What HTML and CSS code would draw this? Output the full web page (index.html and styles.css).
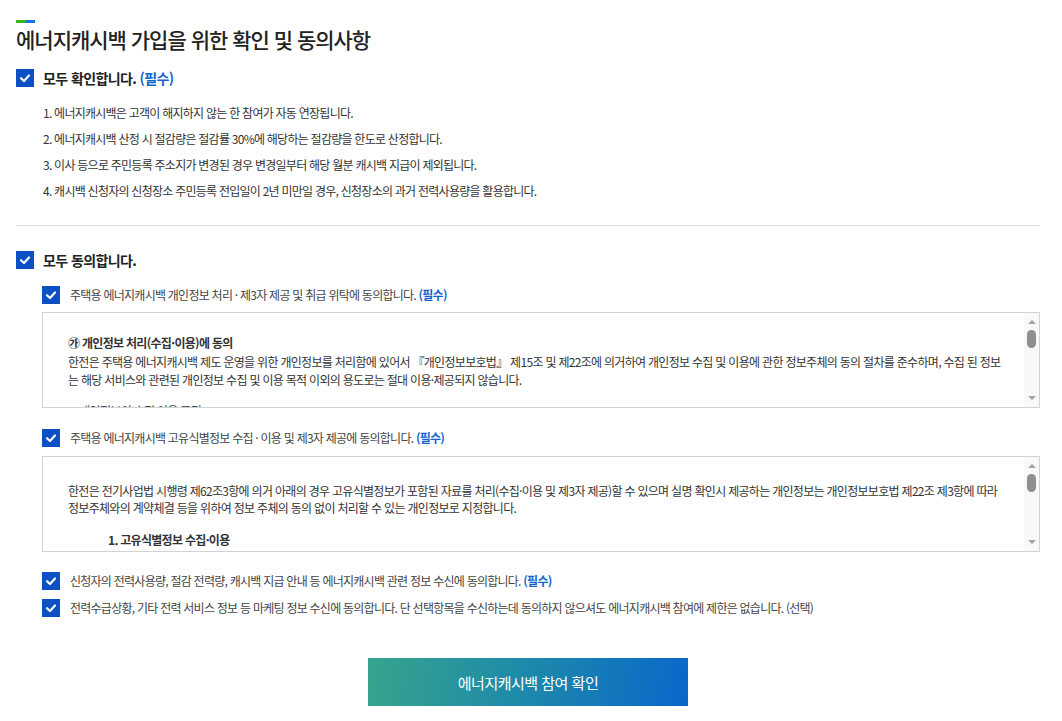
FILE: index.html
```html
<!DOCTYPE html>
<html lang="ko">
  <head>
    <meta charset="UTF-8" />
    <meta name="viewport" content="width=device-width, initial-scale=1.0" />
    <title>에너지캐시백 가입 동의</title>
    <link rel="stylesheet" href="styles.css">
  </head>
  <body>
    <div class="wrap">
      <div class="accent"><span class="g"></span><span class="b"></span></div>
      <h1 class="title">에너지캐시백 가입을 위한 확인 및 동의사항</h1>

      <label class="chk-all chk-confirm">
        <span class="box"><svg viewBox="0 0 18 18" width="18" height="18"><polyline points="5,9.2 8,12 13,6.5" fill="none" stroke="#fff" stroke-width="2.2" stroke-linecap="round" stroke-linejoin="round"/></svg></span>
        <span>모두 확인합니다. <em class="req">(필수)</em></span>
      </label>

      <ol class="notice">
        <li>1. 에너지캐시백은 고객이 해지하지 않는 한 참여가 자동 연장됩니다.</li>
        <li>2. 에너지캐시백 산정 시 절감량은 절감률 30%에 해당하는 절감량을 한도로 산정합니다.</li>
        <li>3. 이사 등으로 주민등록 주소지가 변경된 경우 변경일부터 해당 월분 캐시백 지급이 제외됩니다.</li>
        <li>4. 캐시백 신청자의 신청장소 주민등록 전입일이 2년 미만일 경우, 신청장소의 과거 전력사용량을 활용합니다.</li>
      </ol>

      <hr class="divider" />

      <label class="chk-all chk-agree">
        <span class="box"><svg viewBox="0 0 18 18" width="18" height="18"><polyline points="5,9.2 8,12 13,6.5" fill="none" stroke="#fff" stroke-width="2.2" stroke-linecap="round" stroke-linejoin="round"/></svg></span>
        <span>모두 동의합니다.</span>
      </label>

      <div class="agree-list">
        <label class="chk">
          <span class="box"><svg viewBox="0 0 18 18" width="18" height="18"><polyline points="5,9.2 8,12 13,6.5" fill="none" stroke="#fff" stroke-width="2.2" stroke-linecap="round" stroke-linejoin="round"/></svg></span>
          <span>주택용 에너지캐시백 개인정보 처리 · 제3자 제공 및 취급 위탁에 동의합니다. <em class="req">(필수)</em></span>
        </label>
        <div class="terms">
          <div class="terms-body">
            <p class="strong">㉮ 개인정보 처리(수집·이용)에 동의</p>
            <p>한전은 주택용 에너지캐시백 제도 운영을 위한 개인정보를 처리함에 있어서 『개인정보보호법』 제15조 및 제22조에 의거하여 개인정보 수집 및 이용에 관한 정보주체의 동의 절차를 준수하며, 수집 된 정보는 해당 서비스와 관련된 개인정보 수집 및 이용 목적 이외의 용도로는 절대 이용·제공되지 않습니다.</p>
            <p class="gap">1. 개인정보의 수집·이용 목적</p>
            <p>에너지캐시백 참여 신청 접수, 참여자 확인, 전력 절감량 산정 및 캐시백 지급, 제도 관련 안내 및 고지사항 전달</p>
          </div>
          <div class="scrollbar">
            <span class="arrow-up"></span>
            <span class="thumb"></span>
            <span class="arrow-down"></span>
          </div>
        </div>

        <label class="chk">
          <span class="box"><svg viewBox="0 0 18 18" width="18" height="18"><polyline points="5,9.2 8,12 13,6.5" fill="none" stroke="#fff" stroke-width="2.2" stroke-linecap="round" stroke-linejoin="round"/></svg></span>
          <span>주택용 에너지캐시백 고유식별정보 수집 · 이용 및 제3자 제공에 동의합니다. <em class="req">(필수)</em></span>
        </label>
        <div class="terms terms-2">
          <div class="terms-body">
            <p>한전은 전기사업법 시행령 제62조3항에 의거 아래의 경우 고유식별정보가 포함된 자료를 처리(수집·이용 및 제3자 제공)할 수 있으며 실명 확인시 제공하는 개인정보는 개인정보보호법 제22조 제3항에 따라 정보주체와의 계약체결 등을 위하여 정보 주체의 동의 없이 처리할 수 있는 개인정보로 지정합니다.</p>
            <p class="strong sub">1. 고유식별정보 수집·이용</p>
            <p class="sub">수집·이용 목적 : 에너지캐시백 참여자 본인 확인 및 캐시백 지급</p>
          </div>
          <div class="scrollbar">
            <span class="arrow-up"></span>
            <span class="thumb"></span>
            <span class="arrow-down"></span>
          </div>
        </div>

        <label class="chk chk-gap">
          <span class="box"><svg viewBox="0 0 18 18" width="18" height="18"><polyline points="5,9.2 8,12 13,6.5" fill="none" stroke="#fff" stroke-width="2.2" stroke-linecap="round" stroke-linejoin="round"/></svg></span>
          <span>신청자의 전력사용량, 절감 전력량, 캐시백 지급 안내 등 에너지캐시백 관련 정보 수신에 동의합니다. <em class="req">(필수)</em></span>
        </label>
        <label class="chk chk-tight">
          <span class="box"><svg viewBox="0 0 18 18" width="18" height="18"><polyline points="5,9.2 8,12 13,6.5" fill="none" stroke="#fff" stroke-width="2.2" stroke-linecap="round" stroke-linejoin="round"/></svg></span>
          <span>전력수급상황, 기타 전력 서비스 정보 등 마케팅 정보 수신에 동의합니다. 단 선택항목을 수신하는데 동의하지 않으셔도 에너지캐시백 참여에 제한은 없습니다. (선택)</span>
        </label>
      </div>

      <div class="actions">
        <button type="button" class="btn-submit">에너지캐시백 참여 확인</button>
      </div>
    </div>
  </body>
</html>
```

FILE: styles.css
```css
body {
  margin: 0;
  padding: 0;
  background-color: #fff;
  font-family: "Noto Sans CJK KR", "Noto Sans", sans-serif;
  color: #333;
}
.wrap {
  width: 1024px;
  padding: 20px 0 0 16px;
}
.accent {
  display: flex;
  height: 3px;
}
.accent .g {
  width: 10px;
  background-color: #3cb521;
}
.accent .b {
  width: 9px;
  background-color: #1475dc;
}
.title {
  margin: 1px 0 0;
  font-size: 21px;
  font-weight: 500;
  letter-spacing: -1px;
  line-height: 30px;
  color: #222;
}
.box {
  display: inline-flex;
  width: 18px;
  height: 18px;
  flex: none;
  background-color: #0d4fc4;
}
.chk-all {
  display: flex;
  align-items: center;
  gap: 9px;
  font-size: 14px;
  font-weight: 700;
  line-height: 20px;
  letter-spacing: -0.6px;
  color: #222;
}
.chk-confirm {
  margin-top: 14px;
}
.chk-agree {
  margin-top: 24px;
}
.req {
  font-style: normal;
  color: #1464cf;
}
.notice {
  list-style: none;
  margin: 12px 0 0;
  padding: 0 0 0 27px;
  font-size: 12px;
  letter-spacing: -0.75px;
  color: #333;
}
.notice li {
  line-height: 26px;
}
.divider {
  margin: 21px 0 0;
  border: none;
  border-top: 1px solid #dcdcdc;
}
.agree-list {
  padding-left: 26px;
}
.chk {
  display: flex;
  align-items: center;
  gap: 10px;
  margin-top: 15px;
  font-size: 12px;
  line-height: 20px;
  letter-spacing: -0.75px;
  color: #444;
}
.terms + .chk {
  margin-top: 20px;
}
.terms + .chk-gap {
  margin-top: 19px;
}
.chk-tight {
  margin-top: 7px;
}
.chk .req {
  font-weight: 700;
}
.terms {
  display: flex;
  height: 94px;
  margin-top: 7px;
  border: 1px solid #cfd3d8;
  overflow: hidden;
}
.terms-2 {
  margin-top: 8px;
}
.terms-body {
  flex: 1;
  padding: 0 19px 0 25px;
  font-size: 12px;
  letter-spacing: -0.7px;
  line-height: 18.5px;
  color: #333;
}
.terms-body p {
  margin: 0;
}
.terms-body p:first-child {
  margin-top: 21px;
}
.terms-body .strong {
  font-weight: 700;
}
.terms-body .gap {
  margin-top: 12px;
}
.terms-2 .terms-body {
  line-height: 17px;
}
.terms-2 .terms-body p:first-child {
  margin-top: 25px;
}
.terms-body .sub {
  padding-left: 40px;
}
.terms-2 .sub.strong {
  margin-top: 15px;
}
.scrollbar {
  display: flex;
  flex-direction: column;
  align-items: center;
  width: 15px;
  flex: none;
  padding: 7px 0;
  background-color: #f8f8f8;
}
.arrow-up,
.arrow-down {
  width: 0;
  height: 0;
  border-left: 4px solid transparent;
  border-right: 4px solid transparent;
}
.arrow-up {
  border-bottom: 4px solid #a3a3a3;
}
.arrow-down {
  margin-top: auto;
  border-top: 4px solid #a3a3a3;
}
.thumb {
  width: 9px;
  height: 18px;
  margin-top: 6px;
  border-radius: 5px;
  background-color: #8f8f8f;
}
.actions {
  display: flex;
  justify-content: center;
  margin-top: 40px;
}
.btn-submit {
  width: 320px;
  height: 48px;
  border: none;
  background: linear-gradient(100deg, #37a48c 0%, #1f8ca8 45%, #0967cb 100%);
  font-family: inherit;
  font-size: 15px;
  letter-spacing: -0.5px;
  color: #fff;
  cursor: pointer;
}
```
